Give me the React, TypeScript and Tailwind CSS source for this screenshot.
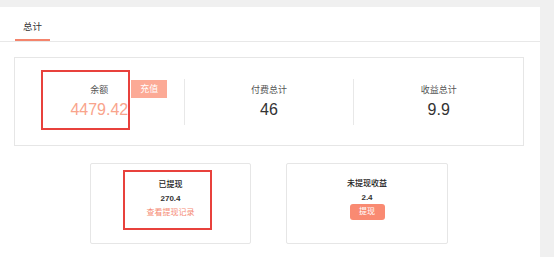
import React from "react";

const cjk = { fontFamily: '"Liberation Sans", "Noto Sans CJK SC", sans-serif' };

function TopColumn({ label, value, highlight }: { label: string; value: string; highlight?: boolean }) {
  return (
    <div className="flex flex-1 justify-center">
      <div className="relative flex flex-col items-center">
        <p className="text-[9px] leading-[13px] text-[#555]">{label}</p>
        <p className={"mt-[3px] text-[16px] leading-[19px] " + (highlight ? "text-[#f9a48c]" : "text-[#333]")}>
          {value}
        </p>
        {highlight && (
          <button className="absolute left-full top-[-4px] ml-[3px] h-[18px] w-[36px] bg-[#fcaa96] text-[9px] leading-[18px] text-white">
            充值
          </button>
        )}
      </div>
    </div>
  );
}

export default function App() {
  return (
    <div className="h-[257px] w-[554px] bg-[#f0f0f0] pr-[14px] pt-[7px]" style={cjk}>
      <div className="h-full bg-white">
        {/* onglet */}
        <div className="flex h-[35px] items-end border-b border-[#e8e8e8] pl-[15px]">
          <div className="flex h-[34px] w-[35px] items-center justify-center border-b-2 border-[#f4846c] pt-[9px] text-[9.5px] text-[#333]">
            总计
          </div>
        </div>

        {/* bloc principal */}
        <div className="relative ml-[14px] mt-[15px] flex h-[89px] w-[510px] items-center border border-[#e6e6e6]">
          <TopColumn label="余额" value="4479.42" highlight />
          <div className="h-[46px] w-px bg-[#e8e8e8]" />
          <TopColumn label="付费总计" value="46" />
          <div className="h-[46px] w-px bg-[#e8e8e8]" />
          <TopColumn label="收益总计" value="9.9" />
          <div className="absolute left-[26px] top-[12px] h-[60px] w-[89px] border-2 border-[#e8413c]" />
        </div>

        {/* cartes du bas */}
        <div className="ml-[14px] mt-[17px] flex w-[510px] justify-center gap-[35px]">
          <div className="relative h-[81px] w-[161px] rounded-[2px] border border-[#e6e6e6] pt-[14px] text-center">
            <p className="text-[8px] font-medium leading-[14px] text-[#222]">已提现</p>
            <p className="text-[8px] font-bold leading-[14px] text-[#333]">270.4</p>
            <p className="text-[8px] leading-[14px] text-[#f58a74]">查看提现记录</p>
            <div className="absolute left-[32px] top-[6px] h-[60px] w-[89px] border-2 border-[#e8413c]" />
          </div>
          <div className="h-[81px] w-[162px] rounded-[2px] border border-[#e6e6e6] pt-[13px] text-center">
            <p className="text-[8px] font-medium leading-[14px] text-[#222]">未提现收益</p>
            <p className="text-[8px] font-bold leading-[14px] text-[#333]">2.4</p>
            <div className="flex h-[14px] items-center justify-center">
              <button className="h-[16px] w-[35px] shrink-0 rounded-[3px] bg-[#f98a72] text-[8px] leading-[16px] text-white">
                提现
              </button>
            </div>
          </div>
        </div>
      </div>
    </div>
  );
}
